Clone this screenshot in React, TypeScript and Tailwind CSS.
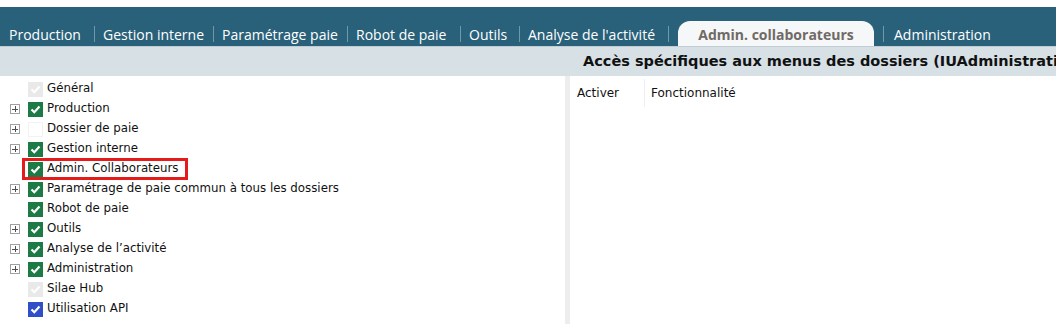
import React from "react";

const tabs: { t: string; w: string }[] = [
  { t: "Production", w: "w-[85px]" },
  { t: "Gestion interne", w: "w-[110px]" },
  { t: "Paramétrage paie", w: "w-[125px]" },
  { t: "Robot de paie", w: "w-[104px]" },
  { t: "Outils", w: "w-[50px]" },
  { t: "Analyse de l'activité", w: "w-[140px]" },
];

type Row = { label: string; plus: boolean; state: "green" | "grey" | "blue" | "empty"; boxed?: boolean };

const rows: Row[] = [
  { label: "Général", plus: false, state: "grey" },
  { label: "Production", plus: true, state: "green" },
  { label: "Dossier de paie", plus: true, state: "empty" },
  { label: "Gestion interne", plus: true, state: "green" },
  { label: "Admin. Collaborateurs", plus: false, state: "green", boxed: true },
  { label: "Paramétrage de paie commun à tous les dossiers", plus: true, state: "green" },
  { label: "Robot de paie", plus: false, state: "green" },
  { label: "Outils", plus: true, state: "green" },
  { label: "Analyse de l’activité", plus: true, state: "green" },
  { label: "Administration", plus: true, state: "green" },
  { label: "Silae Hub", plus: false, state: "grey" },
  { label: "Utilisation API", plus: false, state: "blue" },
];

function Check({ state }: { state: Row["state"] }) {
  const bg =
    state === "green"
      ? "bg-[#1c7a45]"
      : state === "blue"
      ? "bg-[#2f4fc9]"
      : state === "grey"
      ? "bg-[#e9e9e9]"
      : "bg-white border border-[#f2f2f2]";
  return (
    <div className={`w-[15px] h-[15px] ${bg} flex items-center justify-center`}>
      {state !== "empty" && (
        <svg width="11" height="11" viewBox="0 0 11 11">
          <path d="M1.5 5.5 L4.3 8.2 L9.5 2.5" stroke="white" strokeWidth="2.2" fill="none" />
        </svg>
      )}
    </div>
  );
}

function Plus() {
  return (
    <div className="w-[10px] h-[10px] border border-[#a0a0a0] bg-white flex items-center justify-center relative">
      <div className="absolute w-[6px] h-[1px] bg-[#505050]" />
      <div className="absolute w-[1px] h-[6px] bg-[#505050]" />
    </div>
  );
}

export default function App() {
  return (
    <div
      className="w-[1056px] h-[324px] bg-white overflow-hidden text-[#111]"
      style={{ fontFamily: "'Open Sans', 'Liberation Sans', sans-serif" }}
    >
      <div className="h-[7px] bg-white" />
      <div className="h-[39px] bg-[#29617a] flex items-end pl-[9px]">
        {tabs.map(({ t, w }) => (
          <div key={t} className="flex items-center h-[25px]">
            <span className={`${w} text-white text-[14px] leading-[25px] pt-[2px] whitespace-nowrap`}>{t}</span>
            <div className="w-px h-[16px] bg-[#6f98ab] mr-[8px]" />
          </div>
        ))}
        <div className="h-[25px] ml-[1px] bg-[#f6f7f8] rounded-t-[12px] w-[196px] flex items-center justify-center">
          <span className="text-[14px] font-bold text-[#6f6a66] leading-[25px] pt-[2px]">Admin. collaborateurs</span>
        </div>
        <div className="flex items-center h-[25px]">
          <div className="w-px h-[16px] bg-[#6f98ab] ml-[9px] mr-[10px]" />
          <span className="text-white text-[14px] leading-[25px] pt-[2px]">Administration</span>
        </div>
      </div>
      <div className="h-[30px] bg-[#d6e0e5] border-t border-[#c0cdd4] flex items-center pl-[583px] whitespace-nowrap overflow-hidden">
        <span className="font-bold text-[#111] text-[14.5px]" style={{ fontFamily: "'DejaVu Sans', sans-serif" }}>
          Accès spécifiques aux menus des dossiers (IUAdministration)
        </span>
      </div>
      <div className="flex h-[248px]">
        <div className="w-[565px] pt-[3px]" style={{ fontFamily: "'DejaVu Sans', sans-serif" }}>
          {rows.map((r) => (
            <div key={r.label} className="h-[20px] flex items-center">
              <div className="w-[10px]" />
              <div className="w-[10px] flex items-center">{r.plus && <Plus />}</div>
              <div className="w-[8px]" />
              {r.boxed ? (
                <div className="-ml-[6px] flex items-center gap-[4px] border-[3px] border-[#e51a1a] pl-[3px] pr-[7px] h-[22px]">
                  <Check state={r.state} />
                  <span className="text-[11.8px] text-[#111] whitespace-nowrap">{r.label}</span>
                </div>
              ) : (
                <div className="flex items-center gap-[4px]">
                  <Check state={r.state} />
                  <span className="text-[11.8px] text-[#111] whitespace-nowrap">{r.label}</span>
                </div>
              )}
            </div>
          ))}
        </div>
        <div className="w-[5px] bg-[#ededed]" />
        <div className="flex-1">
          <div className="flex h-[30px] items-center text-[12px] pt-[3px]" style={{ fontFamily: "'DejaVu Sans', sans-serif" }}>
            <div className="w-[74px] pl-[7px] flex items-center">Activer</div>
            <div className="w-px h-[28px] bg-[#efefef] self-start" />
            <div className="pl-[6px]">Fonctionnalité</div>
          </div>
        </div>
      </div>
    </div>
  );
}
